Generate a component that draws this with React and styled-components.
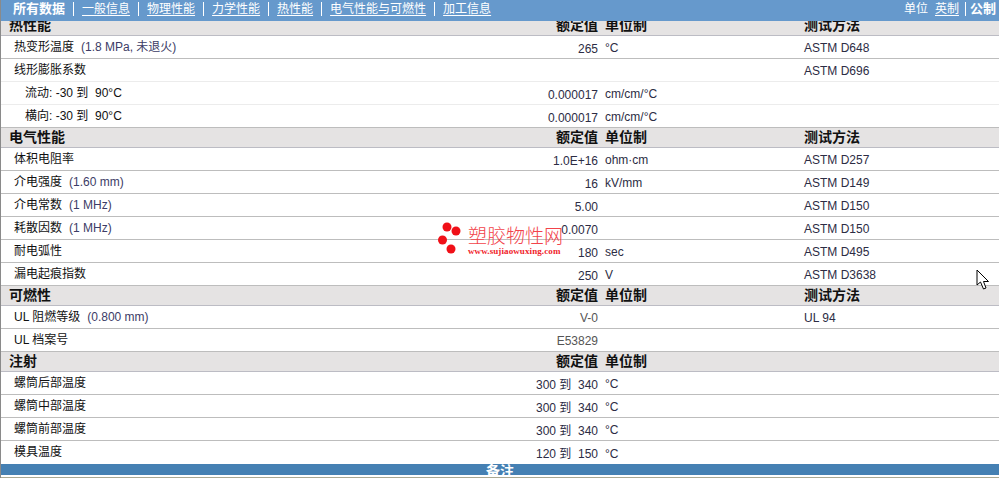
import React from 'react';
import styled, { createGlobalStyle } from 'styled-components';

const GlobalStyle = createGlobalStyle`
  html, body {
    margin: 0;
    padding: 0;
    background: #fff;
    overflow: hidden;
  }
  body {
    font-family: "Liberation Sans", "Noto Sans CJK SC", sans-serif;
    font-size: 12px;
    color: #111;
  }
`;

const Page = styled.div`
  position: relative;
  width: 999px;
  height: 478px;
  overflow: hidden;
  box-sizing: border-box;
  border-left: 1px solid #8a8a8a;
  background: #fff;
`;

const Nav = styled.nav`
  position: relative;
  z-index: 1;
  height: 21px;
  display: flex;
  align-items: center;
  justify-content: space-between;
  background: #6699cc;
  color: #fff;
  padding: 0 3px 4px 12px;
  box-sizing: border-box;
`;

const NavGroup = styled.div`
  display: flex;
  align-items: center;
`;

const NavItem = styled.span`
  font-weight: ${p => (p.$active ? 700 : 400)};
  font-size: ${p => (p.$active ? 13 : 12)}px;
  text-decoration: ${p => (p.$active || p.$plain ? 'none' : 'underline')};
  text-underline-offset: 2px;
  padding-right: ${p => p.$pad ?? 8}px;
  margin-right: ${p => p.$mar ?? 8}px;
  border-right: ${p => (p.$sep ? '1px solid #fff' : 'none')};
  line-height: 14px;
`;

const Table = styled.div`
  display: flex;
  flex-direction: column;
  margin-top: -5px;
`;

const Head = styled.div`
  display: grid;
  grid-template-columns: 597px 206px 1fr;
  height: 20px;
  overflow: hidden;
  align-items: center;
  background: #e5e3e3;
  border-bottom: 1px solid #bcbcc4;
  box-sizing: border-box;
  padding-bottom: 2px;
  font-size: 14px;
  line-height: 18px;
  font-weight: 700;
  color: #111;
`;

const HeadName = styled.div`
  display: flex;
  justify-content: space-between;
  padding-left: 8px;
`;

const HeadUnit = styled.div`
  padding-left: 7px;
`;

const Row = styled.div`
  display: grid;
  grid-template-columns: 597px 206px 1fr;
  height: 23px;
  box-sizing: border-box;
  align-items: center;
  border-bottom: ${p => (p.$last ? 'none' : `1px solid ${p.$light ? '#ececec' : '#bdbdbd'}`)};
`;

const NameCell = styled.div`
  display: flex;
  justify-content: space-between;
  align-items: center;
  padding-left: ${p => (p.$indent ? 24 : 13)}px;
  padding-bottom: 4px;
`;

const Condition = styled.span`
  margin-left: 7px;
  color: #3c3c66;
`;

const Value = styled.span`
  text-align: right;
  color: ${p => (p.$muted ? '#555' : '#2c2c44')};
  padding-top: ${p => p.$top}px;
  margin-bottom: -2px;
`;

const Unit = styled.div`
  padding-left: 7px;
  padding-top: 2px;
  color: #2c2c44;
  white-space: nowrap;
`;

const Method = styled.div`
  padding-top: 2px;
  color: #2c2c44;
`;

const NoteBar = styled.div`
  height: 11px;
  background: #4580b3;
  color: #fff;
  font-size: 14px;
  font-weight: 700;
  text-align: center;
  line-height: 14px;
  overflow: hidden;
`;

const Strip = styled.div`
  height: 2px;
  margin-top: 2px;
  background: #aaa893;
`;

const Watermark = styled.div`
  position: absolute;
  left: 436px;
  top: 220px;
  display: flex;
  align-items: flex-start;
  gap: 5px;
`;

const WatermarkText = styled.div`
  display: flex;
  flex-direction: column;
  padding-top: 7px;
`;

const WatermarkTitle = styled.div`
  color: #f2434a;
  font-size: 19px;
  line-height: 20px;
  font-weight: 300;
`;

const WatermarkUrl = styled.div`
  color: #f0222a;
  font-family: "Liberation Serif", serif;
  font-weight: 700;
  font-size: 9px;
  letter-spacing: 0.1px;
  line-height: 9px;
`;

const Cursor = styled.svg`
  position: absolute;
  left: 975px;
  top: 269px;
`;

const sections = [
  {
    title: '热性能',
    rows: [
      { name: '热变形温度', cond: '(1.8 MPa, 未退火)', value: '265', unit: '°C', method: 'ASTM D648' },
      { name: '线形膨胀系数', method: 'ASTM D696', light: true },
      { name: '流动: -30 到\u00a0\u00a090°C', indent: true, value: '0.000017', unit: 'cm/cm/°C', light: true },
      { name: '横向: -30 到\u00a0\u00a090°C', indent: true, value: '0.000017', unit: 'cm/cm/°C' },
    ],
  },
  {
    title: '电气性能',
    rows: [
      { name: '体积电阻率', value: '1.0E+16', unit: 'ohm·cm', method: 'ASTM D257' },
      { name: '介电强度', cond: '(1.60 mm)', value: '16', unit: 'kV/mm', method: 'ASTM D149' },
      { name: '介电常数', cond: '(1 MHz)', value: '5.00', method: 'ASTM D150' },
      { name: '耗散因数', cond: '(1 MHz)', value: '0.0070', method: 'ASTM D150' },
      { name: '耐电弧性', value: '180', unit: 'sec', method: 'ASTM D495' },
      { name: '漏电起痕指数', value: '250', unit: 'V', method: 'ASTM D3638' },
    ],
  },
  {
    title: '可燃性',
    rows: [
      { name: 'UL 阻燃等级', cond: '(0.800 mm)', value: 'V-0', muted: true, top: 4, method: 'UL 94' },
      { name: 'UL 档案号', value: 'E53829', muted: true, top: 4 },
    ],
  },
  {
    title: '注射',
    noMethod: true,
    rows: [
      { name: '螺筒后部温度', value: '300 到\u00a0\u00a0340', top: 2, unit: '°C' },
      { name: '螺筒中部温度', value: '300 到\u00a0\u00a0340', top: 2, unit: '°C' },
      { name: '螺筒前部温度', value: '300 到\u00a0\u00a0340', top: 2, unit: '°C' },
      { name: '模具温度', value: '120 到\u00a0\u00a0150', top: 2, unit: '°C', last: true },
    ],
  },
];

const navItems = ['一般信息', '物理性能', '力学性能', '热性能', '电气性能与可燃性'];

export default function App() {
  return (
    <Page>
      <GlobalStyle />
      <Nav>
        <NavGroup>
          <NavItem $active $sep>所有数据</NavItem>
          {navItems.map(item => (
            <NavItem key={item} $sep>{item}</NavItem>
          ))}
          <NavItem>加工信息</NavItem>
        </NavGroup>
        <NavGroup>
          <NavItem $plain $pad={0} $mar={7}>单位</NavItem>
          <NavItem $pad={6} $mar={4} $sep>英制</NavItem>
          <NavItem $active $pad={0} $mar={0}>公制</NavItem>
        </NavGroup>
      </Nav>
      <Table>
        {sections.map(section => (
          <React.Fragment key={section.title}>
            <Head>
              <HeadName>
                <span>{section.title}</span>
                <span>额定值</span>
              </HeadName>
              <HeadUnit>单位制</HeadUnit>
              <div>{section.noMethod ? '' : '测试方法'}</div>
            </Head>
            {section.rows.map(row => (
              <Row key={row.name} $light={row.light} $last={row.last}>
                <NameCell $indent={row.indent}>
                  <span>
                    {row.name}
                    {row.cond && <Condition>{row.cond}</Condition>}
                  </span>
                  <Value $muted={row.muted} $top={row.top ?? 6}>{row.value}</Value>
                </NameCell>
                <Unit>{row.unit}</Unit>
                <Method>{row.method}</Method>
              </Row>
            ))}
          </React.Fragment>
        ))}
        <NoteBar>备注</NoteBar>
        <Strip />
      </Table>
      <Watermark>
        <svg width="26" height="34" viewBox="0 0 26 34">
          <circle cx="10" cy="7" r="4.5" fill="#f01018" />
          <circle cx="19" cy="11" r="4.5" fill="#f01018" />
          <circle cx="5.5" cy="20" r="4.5" fill="#f01018" />
          <circle cx="14" cy="29" r="4.5" fill="#f01018" />
        </svg>
        <WatermarkText>
          <WatermarkTitle>塑胶物性网</WatermarkTitle>
          <WatermarkUrl>www.sujiaowuxing.com</WatermarkUrl>
        </WatermarkText>
      </Watermark>
      <Cursor width="14" height="22" viewBox="0 0 14 22">
        <path d="M1 1 L1 16 L4.5 13 L7.5 20 L10 19 L7.5 12.5 L12.5 12.5 Z" fill="#fff" stroke="#000" strokeWidth="1" />
      </Cursor>
    </Page>
  );
}
